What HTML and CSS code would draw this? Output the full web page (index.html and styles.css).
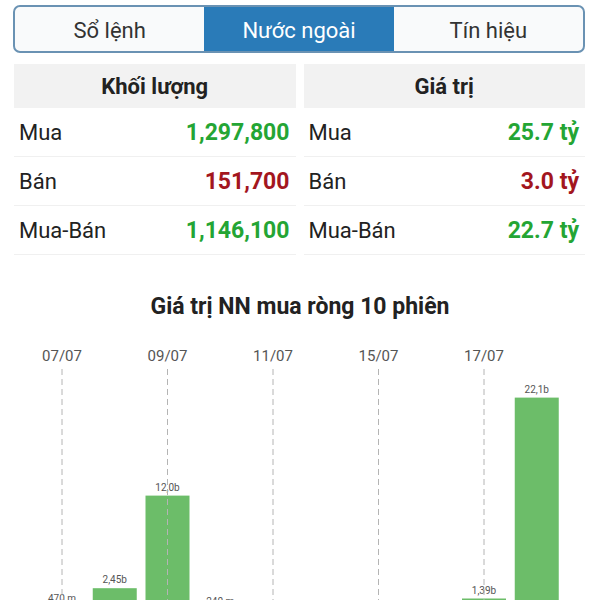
FILE: index.html
```html
<!DOCTYPE html>
<html>
<head>
    <link rel="stylesheet" href="styles.css">
</head>
<body>
    <div class="tabs">
        <div class="tab">Sổ lệnh</div>
        <div class="tab active">Nước ngoài</div>
        <div class="tab">Tín hiệu</div>
    </div>

    <div class="stats">
        <div class="stat-table">
            <div class="stat-head">Khối lượng</div>
            <div class="stat-row"><span>Mua</span><span class="up">1,297,800</span></div>
            <div class="stat-row"><span>Bán</span><span class="down">151,700</span></div>
            <div class="stat-row"><span>Mua-Bán</span><span class="up">1,146,100</span></div>
        </div>
        <div class="stat-table">
            <div class="stat-head">Giá trị</div>
            <div class="stat-row"><span>Mua</span><span class="up">25.7 tỷ</span></div>
            <div class="stat-row"><span>Bán</span><span class="down">3.0 tỷ</span></div>
            <div class="stat-row"><span>Mua-Bán</span><span class="up">22.7 tỷ</span></div>
        </div>
    </div>

    <h2 class="chart-title">Giá trị NN mua ròng 10 phiên</h2>

    <!-- net foreign buy per session, zero line at y=281, 9.7px per billion -->
    <svg class="chart" width="600" height="270" viewBox="0 0 600 270">
        <g class="dates">
            <text x="62" y="30">07/07</text>
            <text x="167.5" y="30">09/07</text>
            <text x="273" y="30">11/07</text>
            <text x="378.5" y="30">15/07</text>
            <text x="484" y="30">17/07</text>
        </g>
        <g class="bars">
            <rect x="40" y="276.4" width="44" height="4.6"></rect>
            <rect x="92.75" y="257.2" width="44" height="23.8"></rect>
            <rect x="145.5" y="164.6" width="44" height="116.4"></rect>
            <rect x="198.25" y="278.7" width="44" height="2.3"></rect>
            <rect x="462" y="267.5" width="44" height="13.5"></rect>
            <rect x="514.75" y="66.6" width="44" height="214.4"></rect>
        </g>
        <g class="values">
            <text x="62" y="271.4">470 m</text>
            <text x="114.75" y="252.2">2,45b</text>
            <text x="167.5" y="159.6">12,0b</text>
            <text x="220.25" y="273.7">240 m</text>
            <text x="484" y="262.5">1,39b</text>
            <text x="536.75" y="61.6">22,1b</text>
        </g>
        <g class="grid">
            <line x1="62" y1="38" x2="62" y2="270"></line>
            <line x1="167.5" y1="38" x2="167.5" y2="270"></line>
            <line x1="273" y1="38" x2="273" y2="270"></line>
            <line x1="378.5" y1="38" x2="378.5" y2="270"></line>
            <line x1="484" y1="38" x2="484" y2="270"></line>
        </g>
    </svg>
</body>
</html>
```

FILE: styles.css
```css
body {
    margin: 0;
    background: #fff;
    font-family: Roboto, 'Noto Sans', sans-serif;
    color: #222;
}
.tabs {
    display: flex;
    height: 44px;
    margin: 5px 15px 0 13px;
    border: 2px solid #6a92b3;
    border-radius: 7px;
    background: #f9fafb;
    overflow: hidden;
}
.tab {
    flex: 1;
    display: flex;
    align-items: center;
    justify-content: center;
    padding-top: 2px;
    font-size: 22px;
    color: #333;
}
.tab.active {
    background: #2a7bb8;
    color: #fff;
}
.stats {
    display: flex;
    gap: 8px;
    margin: 11px 15px 0 14px;
}
.stat-table {
    flex: 1;
}
.stat-head {
    height: 44px;
    display: flex;
    align-items: center;
    justify-content: center;
    background: #f2f2f2;
    font-size: 22px;
    font-weight: bold;
    color: #222;
}
.stat-row {
    height: 48px;
    display: flex;
    align-items: center;
    justify-content: space-between;
    padding: 0 6px 0 5px;
    border-bottom: 1px solid #f0f0f0;
    font-size: 22px;
}
.up {
    color: #24a534;
    font-weight: bold;
    font-size: 23px;
}
.down {
    color: #a3161e;
    font-weight: bold;
    font-size: 23px;
}
.chart-title {
    margin: 38px 0 0;
    text-align: center;
    font-size: 23px;
    line-height: 28px;
    font-weight: bold;
    color: #222;
}
.chart {
    display: block;
    margin-top: 10px;
}
.dates text {
    font-size: 15px;
    fill: #555;
    text-anchor: middle;
}
.bars rect {
    fill: #6cbd69;
}
.values text {
    font-size: 10px;
    fill: #555;
    text-anchor: middle;
}
.grid line {
    stroke: #b4b4b4;
    stroke-width: 1;
    stroke-dasharray: 6 4;
}
```
